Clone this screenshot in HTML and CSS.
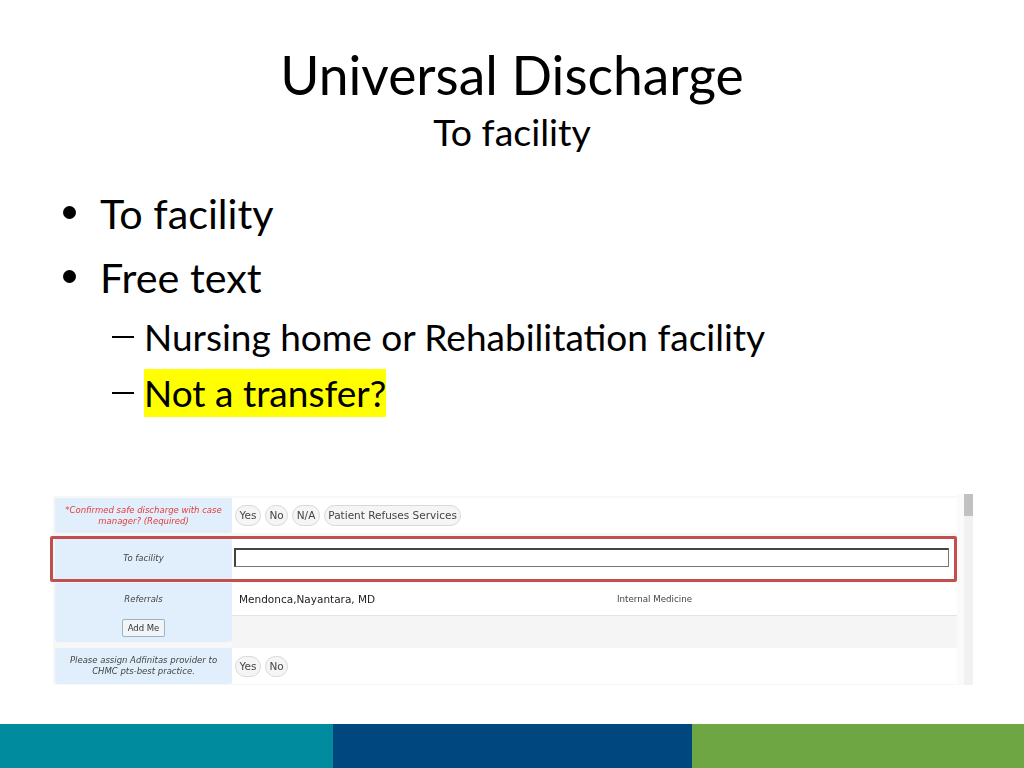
FILE: index.html
```html
<!DOCTYPE html>
<html lang="en">
<head>
    <meta charset="UTF-8">
    <title>Universal Discharge</title>
    <link rel="stylesheet" href="styles.css">
</head>
<body>
<div class="slide">
    <header class="heading">
        <h1>Universal Discharge</h1>
        <h2>To facility</h2>
    </header>
    <ul class="points">
        <li>To facility</li>
        <li>Free text
            <ul class="subpoints">
                <li>Nursing home or Rehabilitation facility</li>
                <li><mark>Not a transfer?</mark></li>
            </ul>
        </li>
    </ul>
    <div class="shot">
        <div class="form">
            <div class="row row-first">
                <div class="label required">*Confirmed safe discharge with case manager? (Required)</div>
                <div class="value">
                    <span class="pill">Yes</span>
                    <span class="pill">No</span>
                    <span class="pill">N/A</span>
                    <span class="pill">Patient Refuses Services</span>
                </div>
            </div>
            <div class="row row-facility">
                <div class="label">To facility</div>
                <div class="value"><div class="textbox"></div></div>
            </div>
            <div class="row row-referrals">
                <div class="label referrals">
                    <span>Referrals</span>
                    <span class="add-me">Add Me</span>
                </div>
                <div class="referral-side">
                    <div class="value referral">
                        <span class="doctor">Mendonca,Nayantara, MD</span>
                        <span class="dept">Internal Medicine</span>
                    </div>
                </div>
            </div>
            <div class="row row-last">
                <div class="label">Please assign Adfinitas provider to CHMC pts-best practice.</div>
                <div class="value">
                    <span class="pill">Yes</span>
                    <span class="pill">No</span>
                </div>
            </div>
            <div class="highlight"></div>
        </div>
        <div class="scrollbar"><div class="thumb"></div></div>
    </div>
    <footer class="bands">
        <div class="band teal"></div>
        <div class="band navy"></div>
        <div class="band green"></div>
    </footer>
</div>
</body>
</html>
```

FILE: styles.css
```css
* {
    box-sizing: border-box;
}

body {
    margin: 0;
    background: #fff;
    color: #000;
    font-family: "Lato", "Liberation Sans", sans-serif;
}

.slide {
    width: 1024px;
    height: 768px;
    display: flex;
    flex-direction: column;
    overflow: hidden;
}

.heading {
    padding-top: 44px;
    text-align: center;
}

.heading h1 {
    margin: 0;
    font-size: 53.4px;
    line-height: 60px;
    font-weight: 400;
}

.heading h2 {
    margin: 3px 0 0;
    font-size: 37.5px;
    line-height: 50px;
    font-weight: 400;
}

.points {
    margin: 24px 0 0;
    padding: 0 0 0 100px;
    list-style: none;
    font-size: 41.3px;
    line-height: 64px;
    height: 313px;
}

.points > li {
    position: relative;
}

.points > li::before {
    content: "";
    position: absolute;
    left: -37px;
    top: 25px;
    width: 13px;
    height: 13px;
    border-radius: 50%;
    background: #000;
}

.subpoints {
    margin: 0;
    padding: 0 0 0 44px;
    list-style: none;
    font-size: 37px;
    line-height: 56px;
}

.subpoints li {
    position: relative;
}

.subpoints li::before {
    content: "";
    position: absolute;
    left: -32px;
    top: 27px;
    width: 22px;
    height: 2px;
    background: #000;
}

mark {
    background: #ffff00;
    color: #000;
    padding: 1px 0 2px;
}

.shot {
    width: 920px;
    height: 191px;
    margin-left: 53px;
    display: flex;
    font-family: "DejaVu Sans", sans-serif;
    filter: blur(0.3px);
}

.form {
    position: relative;
    width: 904px;
    padding: 2px 0 0 2px;
    background: #f7f7f7;
    border-top: 2px solid #fff;
}

.row {
    display: grid;
    grid-template-columns: 177px 725px;
    width: 902px;
}

.row-first {
    height: 35px;
}

.row-facility {
    height: 43px;
    margin-top: 4px;
}

.row-referrals {
    height: 65px;
    margin-top: 3px;
}

.row-last {
    height: 36px;
}

.label {
    display: flex;
    align-items: center;
    justify-content: center;
    padding: 0 4px;
    background: #e0effb;
    color: #444;
    font-size: 8.5px;
    line-height: 11px;
    font-style: italic;
    text-align: center;
    border-radius: 0 0 3px 3px;
}

.required {
    color: #e53a3a;
}

.referrals {
    flex-direction: column;
    justify-content: flex-start;
    gap: 14px;
    padding-top: 11px;
    height: 59px;
}

.add-me {
    padding: 0 5px;
    height: 18px;
    line-height: 16px;
    border: 1px solid #9fb2c0;
    border-radius: 2px;
    background: #f1f5f8;
    color: #333;
    font-style: normal;
}

.value {
    display: flex;
    align-items: center;
    gap: 4px;
    padding: 0 3px;
    background: #fff;
}

.pill {
    height: 21px;
    padding: 0 3.5px;
    border: 1px solid #d8d8d8;
    border-radius: 11px;
    background: #f5f5f5;
    color: #444;
    font-size: 10.5px;
    line-height: 19px;
    white-space: nowrap;
}

.textbox {
    width: 715px;
    height: 19px;
    margin: -2px 0 0 -1px;
    background: #fff;
    border-style: solid;
    border-width: 2px 1px 1px 2px;
    border-color: #444 #777 #777 #444;
}

.referral-side {
    height: 65px;
    background: #f5f5f5;
}

.referral {
    height: 33px;
    padding-left: 7px;
    gap: 0;
    border-bottom: 1px solid #e3e3e3;
}

.doctor {
    width: 378px;
    color: #222;
    font-size: 10.5px;
}

.dept {
    color: #444;
    font-size: 8.7px;
}

/* red box drawn over the screenshot */
.highlight {
    position: absolute;
    left: -3px;
    top: 40px;
    width: 907px;
    height: 46px;
    border: 3px solid #c0504d;
    border-radius: 2px;
}

.scrollbar {
    width: 16px;
    background: linear-gradient(to right, #fafafa 7px, #f1f1f1 7px);
    display: flex;
    justify-content: flex-end;
}

.thumb {
    width: 9px;
    height: 22px;
    background: #c1c1c1;
}

.bands {
    display: flex;
    height: 44px;
    margin-top: auto;
}

.band {
    height: 100%;
}

.teal {
    width: 333px;
    background: #008c9e;
}

.navy {
    width: 359px;
    background: #00467f;
}

.green {
    flex: 1;
    background: #6fa644;
}
```
